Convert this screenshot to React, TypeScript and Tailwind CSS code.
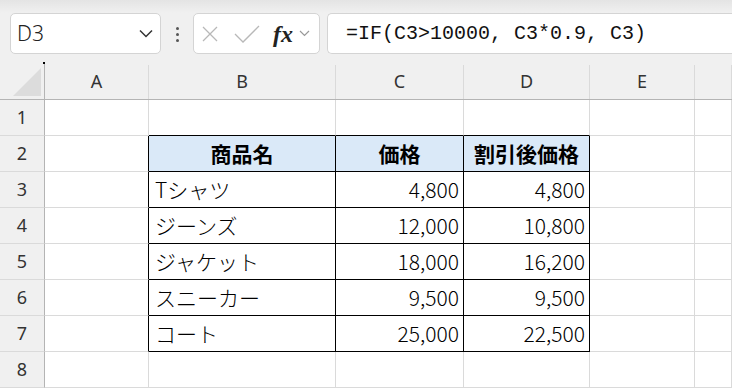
import type { ReactNode } from 'react'

const COLS = ['A', 'B', 'C', 'D', 'E', '']
const ROWS = [1, 2, 3, 4, 5, 6, 7, 8]

const data: Record<number, [string, string, string]> = {
  2: ['商品名', '価格', '割引後価格'],
  3: ['Tシャツ', '4,800', '4,800'],
  4: ['ジーンズ', '12,000', '10,800'],
  5: ['ジャケット', '18,000', '16,200'],
  6: ['スニーカー', '9,500', '9,500'],
  7: ['コート', '25,000', '22,500'],
}

const cellFont = { fontFamily: '"Noto Sans CJK JP", "Noto Sans", sans-serif' }
const uiFont = { fontFamily: '"Noto Sans", "Open Sans", sans-serif' }

function Cell({ row, col }: { row: number; col: number }) {
  const inTable = row >= 2 && row <= 7 && col >= 1 && col <= 3
  const aboveTable = row === 1 && col >= 1 && col <= 3
  const leftOfTable = row >= 2 && row <= 7 && col === 0
  const header = row === 2 && inTable

  let border = 'border-r border-b border-[#dadada]'
  if (inTable) border = 'border-r border-b border-black'
  else if (aboveTable) border = 'border-r border-b border-r-[#dadada] border-b-black'
  else if (leftOfTable) border = 'border-r border-b border-r-black border-b-[#dadada]'

  let content: ReactNode = null
  let align = ''
  if (inTable) {
    const text = data[row][col - 1]
    if (header) {
      align = 'justify-center font-bold'
    } else if (col === 1) {
      align = 'justify-start pl-[6px] font-light'
    } else {
      align = 'justify-end pr-[4px] font-light'
    }
    content = text
  }

  return (
    <div
      className={`flex h-[36px] items-center text-[21px] leading-none text-black ${border} ${align} ${header ? 'bg-[#dae9f8]' : 'bg-white'}`}
      style={cellFont}
    >
      {content}
    </div>
  )
}

function FormulaBar() {
  return (
    <div className="flex h-[63px] items-start bg-[#f0f0f0] pt-[13px] bg-gradient-to-b from-[#e4e4e4] via-[#f0f0f0] via-[20%] to-[#f0f0f0]">
      <div className="ml-[10px] flex h-[41px] w-[151px] items-center justify-between rounded-[5px] border border-[#d4d4d4] bg-white pl-[6px] pr-[6px]">
        <span className="text-[21px] font-light text-[#222]" style={uiFont}>
          D3
        </span>
        <svg width="14" height="9" viewBox="0 0 14 9" fill="none" className="mr-[1px]">
          <path d="M1 1.5 L7 7.5 L13 1.5" stroke="#333" strokeWidth="1.5" />
        </svg>
      </div>
      <div className="flex w-[32px] flex-col items-center gap-[3px] pt-[14px]">
        <span className="h-[3px] w-[3px] rounded-full bg-[#555]" />
        <span className="h-[3px] w-[3px] rounded-full bg-[#555]" />
        <span className="h-[3px] w-[3px] rounded-full bg-[#555]" />
      </div>
      <div className="flex h-[41px] w-[127px] items-center rounded-[5px] border border-[#d4d4d4] bg-white">
        <svg width="16" height="16" viewBox="0 0 16 16" className="ml-[8px]">
          <path d="M1 1 L15 15 M15 1 L1 15" stroke="#b8b8b8" strokeWidth="1.3" />
        </svg>
        <svg width="26" height="18" viewBox="0 0 26 18" className="ml-[16px]">
          <path d="M1 9 L9 17 L25 1" stroke="#b8b8b8" strokeWidth="1.3" fill="none" />
        </svg>
        <span
          className="ml-[13px] text-[24px] font-semibold italic leading-none text-[#222]"
          style={{ fontFamily: '"Liberation Serif", serif' }}
        >
          fx
        </span>
        <svg width="11" height="7" viewBox="0 0 11 7" className="ml-[6px]">
          <path d="M1 1 L5.5 5.5 L10 1" stroke="#999" strokeWidth="1.2" fill="none" />
        </svg>
      </div>
      <div className="ml-[7px] flex h-[41px] flex-1 items-center rounded-l-[5px] border border-r-0 border-[#d4d4d4] bg-white pl-[18px]">
        <span
          className="whitespace-pre text-[20px] text-[#111]"
          style={{ fontFamily: '"Liberation Mono", "DejaVu Sans Mono", monospace' }}
        >
          =IF(C3&gt;10000, C3*0.9, C3)
        </span>
      </div>
    </div>
  )
}

export default function App() {
  const gridCols = 'grid-cols-[45px_104px_187px_128px_126px_105px_1fr]'
  return (
    <div className="h-[388px] w-[732px] overflow-hidden bg-[#f0f0f0]">
      <FormulaBar />
      <div className={`grid ${gridCols}`}>
        {/* corner */}
        <div className="relative flex h-[37px] items-end justify-end border-r border-b border-[#b4b4b4] bg-[#f0f0f0] pb-[3px] pr-[3px]">
          <svg width="28" height="28" viewBox="0 0 28 28">
            <path d="M28 0 L28 28 L0 28 Z" fill="#dcdcdc" />
          </svg>
          <span className="absolute -top-px -right-px h-[2px] w-[2px] bg-black" />
        </div>
        {COLS.map((c, i) => (
          <div
            key={i}
            className="flex h-[37px] items-center justify-center border-b border-[#b4b4b4] bg-[#f0f0f0] text-[18px] text-[#333]"
            style={uiFont}
          >
            <div className="flex h-full w-full items-center justify-center border-r border-[#dadada] [border-image:linear-gradient(to_bottom,transparent_3px,#dadada_3px)_1]">
              {c}
            </div>
          </div>
        ))}
        {ROWS.map((r) => (
          <RowLine key={r} row={r} />
        ))}
      </div>
    </div>
  )
}

function RowLine({ row }: { row: number }) {
  return (
    <>
      <div
        className="flex h-[36px] items-center justify-center border-r border-b border-r-[#b4b4b4] border-b-[#dadada] bg-[#f0f0f0] text-[18px] text-[#333]"
        style={uiFont}
      >
        {row}
      </div>
      {[0, 1, 2, 3, 4, 5].map((c) => (
        <Cell key={c} row={row} col={c} />
      ))}
    </>
  )
}
